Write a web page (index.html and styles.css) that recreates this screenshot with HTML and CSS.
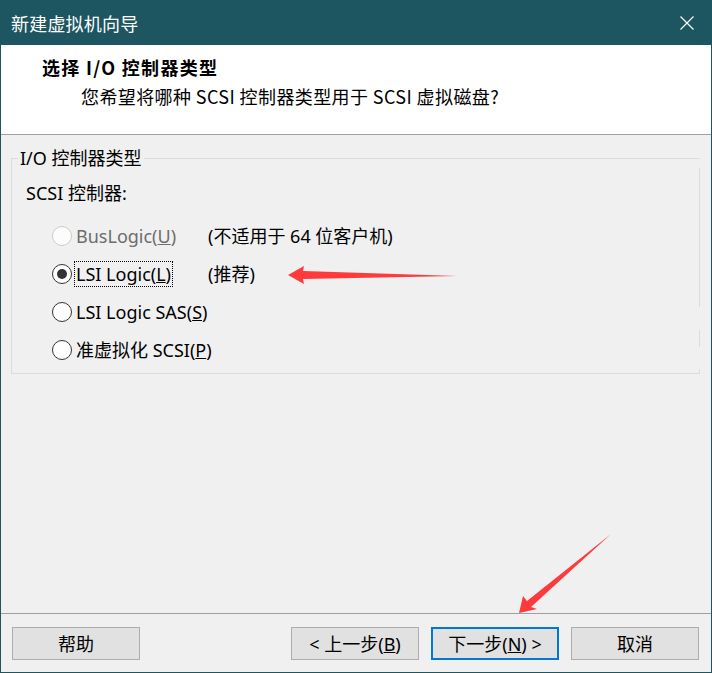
FILE: index.html
```html
<!DOCTYPE html>
<html lang="zh-CN">
<head>
<meta charset="utf-8">
<title>新建虚拟机向导</title>
<link rel="stylesheet" href="styles.css">
</head>
<body>
<div class="window">
  <div class="titlebar">
    <span class="title">新建虚拟机向导</span>
    <svg class="close" width="14" height="14" viewBox="0 0 14 14"><path d="M0.5 0.5 L13.5 13.5 M13.5 0.5 L0.5 13.5" stroke="#ffffff" stroke-width="1.2" fill="none"/></svg>
  </div>
  <div class="header">
    <div class="h-title">选择 I/O 控制器类型</div>
    <div class="h-sub">您希望将哪种 SCSI 控制器类型用于 SCSI 虚拟磁盘?</div>
  </div>
  <div class="content">
    <fieldset class="group">
      <legend>I/O 控制器类型</legend>
      <div class="sublabel">SCSI 控制器:</div>
      <div class="row disabled">
        <span class="radio"></span>
        <span class="lbl">BusLogic(<u>U</u>)</span>
        <span class="note">(不适用于 64 位客户机)</span>
      </div>
      <div class="row">
        <span class="radio checked"></span>
        <span class="lbl"><span class="focus">LSI Logic(<u>L</u>)</span></span>
        <span class="note">(推荐)</span>
      </div>
      <div class="row">
        <span class="radio"></span>
        <span class="lbl">LSI Logic SAS(<u>S</u>)</span>
      </div>
      <div class="row">
        <span class="radio"></span>
        <span class="lbl">准虚拟化 SCSI(<u>P</u>)</span>
      </div>
    </fieldset>
  </div>
  <div class="footer">
    <button class="btn">帮助</button>
    <div class="spacer"></div>
    <button class="btn">&lt; 上一步(<u>B</u>)</button>
    <button class="btn default">下一步(<u>N</u>) &gt;</button>
    <button class="btn">取消</button>
  </div>
  <svg class="arrows" width="712" height="673" viewBox="0 0 712 673">
    <polygon points="288,275 304,266 303,271 457,276 303,279 304,284" fill="#fe3a3a"/>
    <polygon points="519,613 523,596 527,601 611,534 531,607 537,609" fill="#fe3a3a"/>
  </svg>
</div>
</body>
</html>
```

FILE: styles.css
```css
* { box-sizing: border-box; }
html, body { margin: 0; padding: 0; }
body {
  width: 712px;
  height: 673px;
  background: #f0f0f0;
  font-family: "Noto Sans", "Noto Sans CJK SC", sans-serif;
  font-size: 18px;
  color: #000;
  overflow: hidden;
}
.window {
  position: relative;
  width: 712px;
  height: 673px;
  border: 1px solid #1d5560;
  border-top: none;
  display: flex;
  flex-direction: column;
  background: #f0f0f0;
}
.titlebar {
  height: 45px;
  margin: 0 -1px;
  background: #1d5560;
  display: flex;
  align-items: center;
  justify-content: space-between;
  padding: 0 18px 0 11px;
  color: #fff;
}
.title {
  font-family: "Noto Sans CJK SC", sans-serif;
  font-size: 18px;
  line-height: 24px;
  letter-spacing: 0.2px;
}
.close { display: block; }
.header {
  height: 90px;
  background: #fff;
  border-bottom: 1px solid #a0a0a0;
  padding: 9px 0 0 41px;
}
.h-title {
  font-family: "Noto Sans CJK SC", sans-serif;
  font-weight: bold;
  font-size: 18px;
  line-height: 26px;
  letter-spacing: 1.3px;
}
.h-sub {
  font-family: "Noto Sans CJK SC", sans-serif;
  font-size: 18px;
  line-height: 26px;
  margin-top: 3px;
  padding-left: 39px;
  letter-spacing: 0.4px;
}
.content {
  flex: 1;
  padding: 12px 11px 0 10px;
}
.group {
  position: relative;
  margin: 0;
  padding: 13px 0 1px 40px;
  height: 227px;
  border: 1px solid #dcdcdc;
  border-right-color: transparent;
}
.group::after {
  content: "";
  position: absolute;
  right: -1px;
  top: -1px;
  bottom: -1px;
  width: 1px;
  background: linear-gradient(to bottom, #dcdcdc 0 139px, transparent 139px 162px, #dcdcdc 162px 179px, transparent 179px 201px, #dcdcdc 201px);
}
.group legend {
  margin-left: -34px;
  padding: 0 2px;
  font-size: 18px;
  line-height: 22px;
}
.sublabel {
  margin-left: -26px;
  line-height: 22px;
  margin-bottom: 13px;
}
.row {
  height: 38px;
  display: flex;
  align-items: center;
}
.radio {
  width: 20px;
  height: 20px;
  border: 1px solid #333;
  border-radius: 50%;
  background: #fff;
  display: flex;
  align-items: center;
  justify-content: center;
  flex: none;
}
.radio.checked::before {
  content: "";
  width: 10px;
  height: 10px;
  border-radius: 50%;
  background: #333;
}
.disabled .radio { border-color: #cccccc; background: #fcfcfc; }
.disabled .lbl { color: #6d6d6d; }
.lbl {
  min-width: 136px;
  padding-left: 4px;
  flex: none;
  line-height: 22px;
  white-space: nowrap;
}
.focus {
  display: inline-block;
  outline: 1px dotted #000;
  outline-offset: 0;
  padding: 1px;
  margin-left: -1px;
}
.note {
  line-height: 22px;
  white-space: nowrap;
}
.footer {
  height: 59px;
  border-top: 1px solid #a0a0a0;
  display: flex;
  align-items: flex-start;
  gap: 12px;
  padding: 13px 12px 0 11px;
}
.spacer { flex: 1; }
.btn {
  width: 128px;
  height: 33px;
  border: 1px solid #adadad;
  background: #e1e1e1;
  font-family: "Noto Sans", "Noto Sans CJK SC", sans-serif;
  font-size: 18px;
  color: #000;
  padding: 0;
  line-height: 22px;
}
.btn.default { border: 2px solid #0078d7; }
.arrows {
  position: absolute;
  left: -1px;
  top: 0;
  pointer-events: none;
}
```
